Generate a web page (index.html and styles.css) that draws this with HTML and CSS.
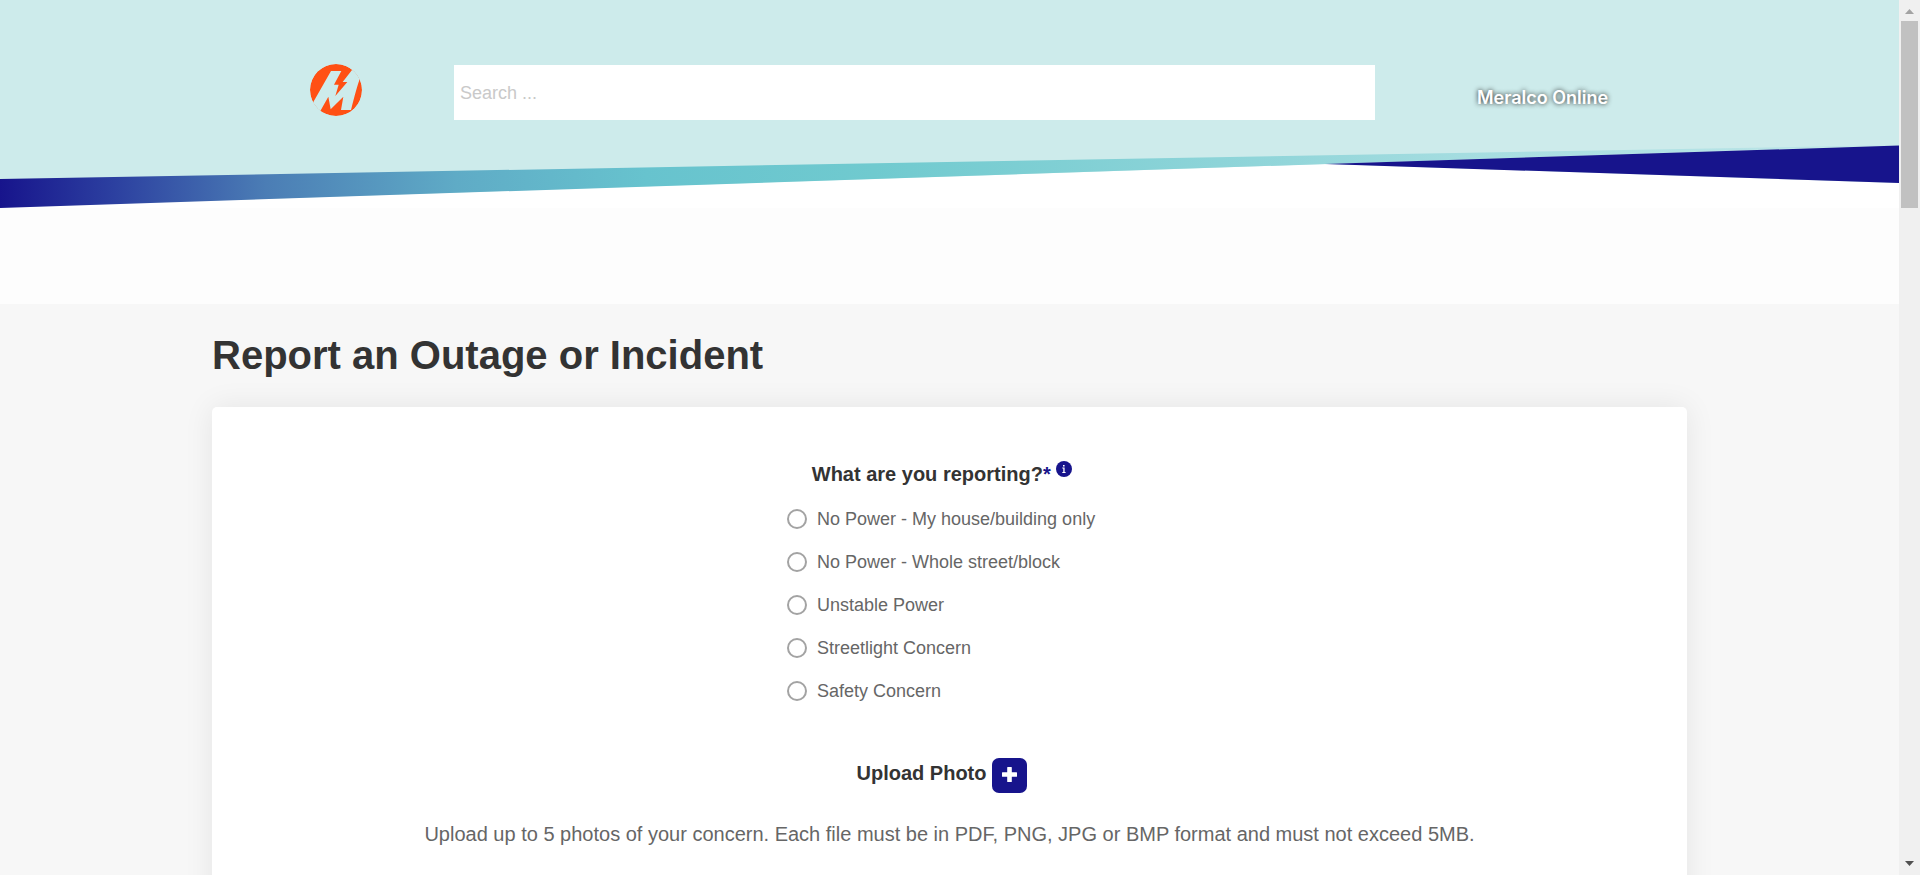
FILE: index.html
```html
<!DOCTYPE html>
<html lang="en">
<head>
<meta charset="utf-8">
<title>Report an Outage or Incident</title>
<link rel="stylesheet" href="styles.css">
</head>
<body>
<div class="shell">
  <div class="page">
    <header class="header">
      <svg class="header-art" viewBox="0 0 1899 208" preserveAspectRatio="none" aria-hidden="true">
        <defs>
          <linearGradient id="ribbon" gradientUnits="userSpaceOnUse" x1="0" y1="0" x2="1899" y2="0">
            <stop offset="0" stop-color="#17148c"/>
            <stop offset="0.06" stop-color="#2c40a0"/>
            <stop offset="0.14" stop-color="#4b7db5"/>
            <stop offset="0.24" stop-color="#5fabc6"/>
            <stop offset="0.34" stop-color="#67c3ce"/>
            <stop offset="0.46" stop-color="#70cacf"/>
            <stop offset="0.68" stop-color="#93d6da"/>
            <stop offset="0.8" stop-color="#aadfe2"/>
            <stop offset="1" stop-color="#bfe6e8"/>
          </linearGradient>
        </defs>
        <path d="M0 207.500L1327 164L1899 183V208H0Z" fill="#fff"/>
        <path d="M0 179L1899 145L1327 164L0 208Z" fill="url(#ribbon)"/>
        <path d="M1325 164L1899 145.500V183Z" fill="#17148c"/>
      </svg>
      <div class="header-bar">
        <a class="logo" href="#" aria-label="Meralco">
          <svg viewBox="0 0 156 156" width="52" height="52" aria-hidden="true">
            <circle cx="78" cy="78" r="78" fill="#ff5014"/>
            <path d="M0 126L10 114L63 21H94L72 62H86L76 96L112 54H98L126 18L160 0L149 46Q140 70 123 138H93L100 98L62 136L55 98L28 146L0 160Z" fill="#cdebeb"/>
          </svg>
        </a>
        <input class="search" type="search" placeholder="Search ..." aria-label="Search">
        <a class="brand" href="#">Meralco Online</a>
      </div>
    </header>
    <div class="nav-space"></div>
    <main class="content">
      <h1 class="title">Report an Outage or Incident</h1>
      <form class="card">
        <fieldset class="question">
          <legend class="legend">What are you reporting?<span class="required">*</span>
            <button class="info" type="button" aria-label="More information">
              <svg viewBox="0 0 16 16" width="16" height="16" aria-hidden="true"><circle cx="8" cy="8" r="8" fill="#17148c"/><path d="M7 4h1.600v1.500H7zM6.300 6.600h2.300v4.400h1v.9H6.300V11h1V7.500h-1z" fill="#fff"/></svg>
            </button>
          </legend>
          <div class="options">
            <label class="option"><input type="radio" name="report">No Power - My house/building only</label>
            <label class="option"><input type="radio" name="report">No Power - Whole street/block</label>
            <label class="option"><input type="radio" name="report">Unstable Power</label>
            <label class="option"><input type="radio" name="report">Streetlight Concern</label>
            <label class="option"><input type="radio" name="report">Safety Concern</label>
          </div>
        </fieldset>
        <div class="upload">
          <span class="upload-label" id="upload">Upload Photo</span>
          <button class="add" type="button" aria-labelledby="upload">
            <svg viewBox="0 0 15 15" width="15" height="15" aria-hidden="true"><path d="M5.200.5q0-.5.500-.5h3.600q.5 0 .5.500v4.700h4.700q.5 0 .5.500v3.600q0 .5-.5.500H9.800v4.700q0 .5-.5.500H5.700q-.5 0-.5-.5V9.800H.5q-.5 0-.5-.5V5.700q0-.5.500-.5h4.700z" fill="#fff"/></svg>
          </button>
        </div>
        <p class="note">Upload up to 5 photos of your concern. Each file must be in PDF, PNG, JPG or BMP format and must not exceed 5MB.</p>
      </form>
    </main>
  </div>
  <div class="scrollbar" aria-hidden="true">
    <svg class="arrow" viewBox="0 0 9 5" width="9" height="5"><path d="M0 5L4.500 0L9 5Z" fill="#a3a3a3"/></svg>
    <div class="thumb"></div>
    <svg class="arrow arrow-down" viewBox="0 0 9 5" width="9" height="5"><path d="M0 0L4.500 5L9 0Z" fill="#505050"/></svg>
  </div>
</div>
</body>
</html>
```
FILE: styles.css
```css
* { box-sizing: border-box; }
body {
  margin: 0;
  font-family: "Liberation Sans", Arial, sans-serif;
  color: #333;
  background: #f7f7f7;
}
.shell {
  display: grid;
  grid-template-columns: minmax(0, 1fr) 21px;
  height: 100vh;
  overflow: hidden;
}
.page { overflow: hidden; }
.header {
  position: relative;
  height: 208px;
  background: #cdebeb;
}
.header-art {
  position: absolute;
  inset: 0;
  width: 100%;
  height: 100%;
}
.header-bar {
  position: relative;
  display: grid;
  grid-template-columns: 242fr 921fr 312fr;
  max-width: 1475px;
  margin: 0 auto;
  padding-top: 64px;
}
.logo {
  display: block;
  padding-left: 98px;
  height: 52px;
}
.logo svg { display: block; border-radius: 50%; }
.search {
  appearance: none;
  width: 100%;
  height: 55px;
  margin: 1px 0 0;
  padding: 2px 6px 0;
  border: 0;
  border-radius: 0;
  background: #fff;
  font: 18px "Liberation Sans", Arial, sans-serif;
  color: #666;
}
.search::placeholder { color: #c9c9c9; }
.brand {
  padding: 22px 0 0 102px;
  font: 600 18px/24px Inter, sans-serif;
  color: #fff;
  text-decoration: none;
  text-shadow: 0 0 5px #222;
  white-space: nowrap;
}
.nav-space {
  height: 96px;
  background: #fdfdfd;
}
.content {
  max-width: 1475px;
  margin: 0 auto;
}
.title {
  margin: 0;
  padding: 27px 0 28px;
  font-size: 40px;
  line-height: 48px;
}
.card {
  padding: 52px 15px 80px;
  border-radius: 5px;
  background: #fff;
  box-shadow: 0 0 30px rgba(0, 0, 0, 0.08);
}
.question {
  margin: 0;
  padding: 0 15px 0 0;
  border: 0;
}
.legend {
  width: 100%;
  padding: 0;
  text-align: center;
  font-size: 20px;
  font-weight: 700;
  line-height: 30px;
}
.required { color: #17148c; }
.info {
  padding: 0;
  border: 0;
  background: none;
  line-height: 0;
  vertical-align: 4px;
}
.options {
  display: grid;
  gap: 23px;
  width: 310px;
  margin: 0 auto;
  padding-top: 20px;
}
.option {
  display: flex;
  align-items: center;
  gap: 10px;
  font-size: 18px;
  line-height: 20px;
  color: #666;
  white-space: nowrap;
}
.option input {
  appearance: none;
  width: 20px;
  height: 20px;
  margin: 0;
  border: 2px solid #a3a3a3;
  border-radius: 50%;
  background: #fff;
}
.upload {
  display: flex;
  justify-content: center;
  gap: 6px;
  padding: 57px 15px 0 0;
}
.upload-label {
  font-size: 20px;
  font-weight: 700;
  line-height: 30px;
}
.add {
  display: grid;
  place-items: center;
  width: 35px;
  height: 35px;
  padding: 0 0 2px;
  border: 0;
  border-radius: 7px;
  background: #17148c;
}
.note {
  margin: 0;
  padding-top: 26px;
  text-align: center;
  font-size: 20px;
  line-height: 30px;
  color: #666;
}
.scrollbar {
  display: flex;
  flex-direction: column;
  align-items: center;
  padding: 9px 2px;
  background: #f0f0f0;
}
.thumb {
  width: 17px;
  height: 187px;
  margin-top: 7px;
  background: #c1c1c1;
}
.arrow-down { margin-top: auto; }
```
